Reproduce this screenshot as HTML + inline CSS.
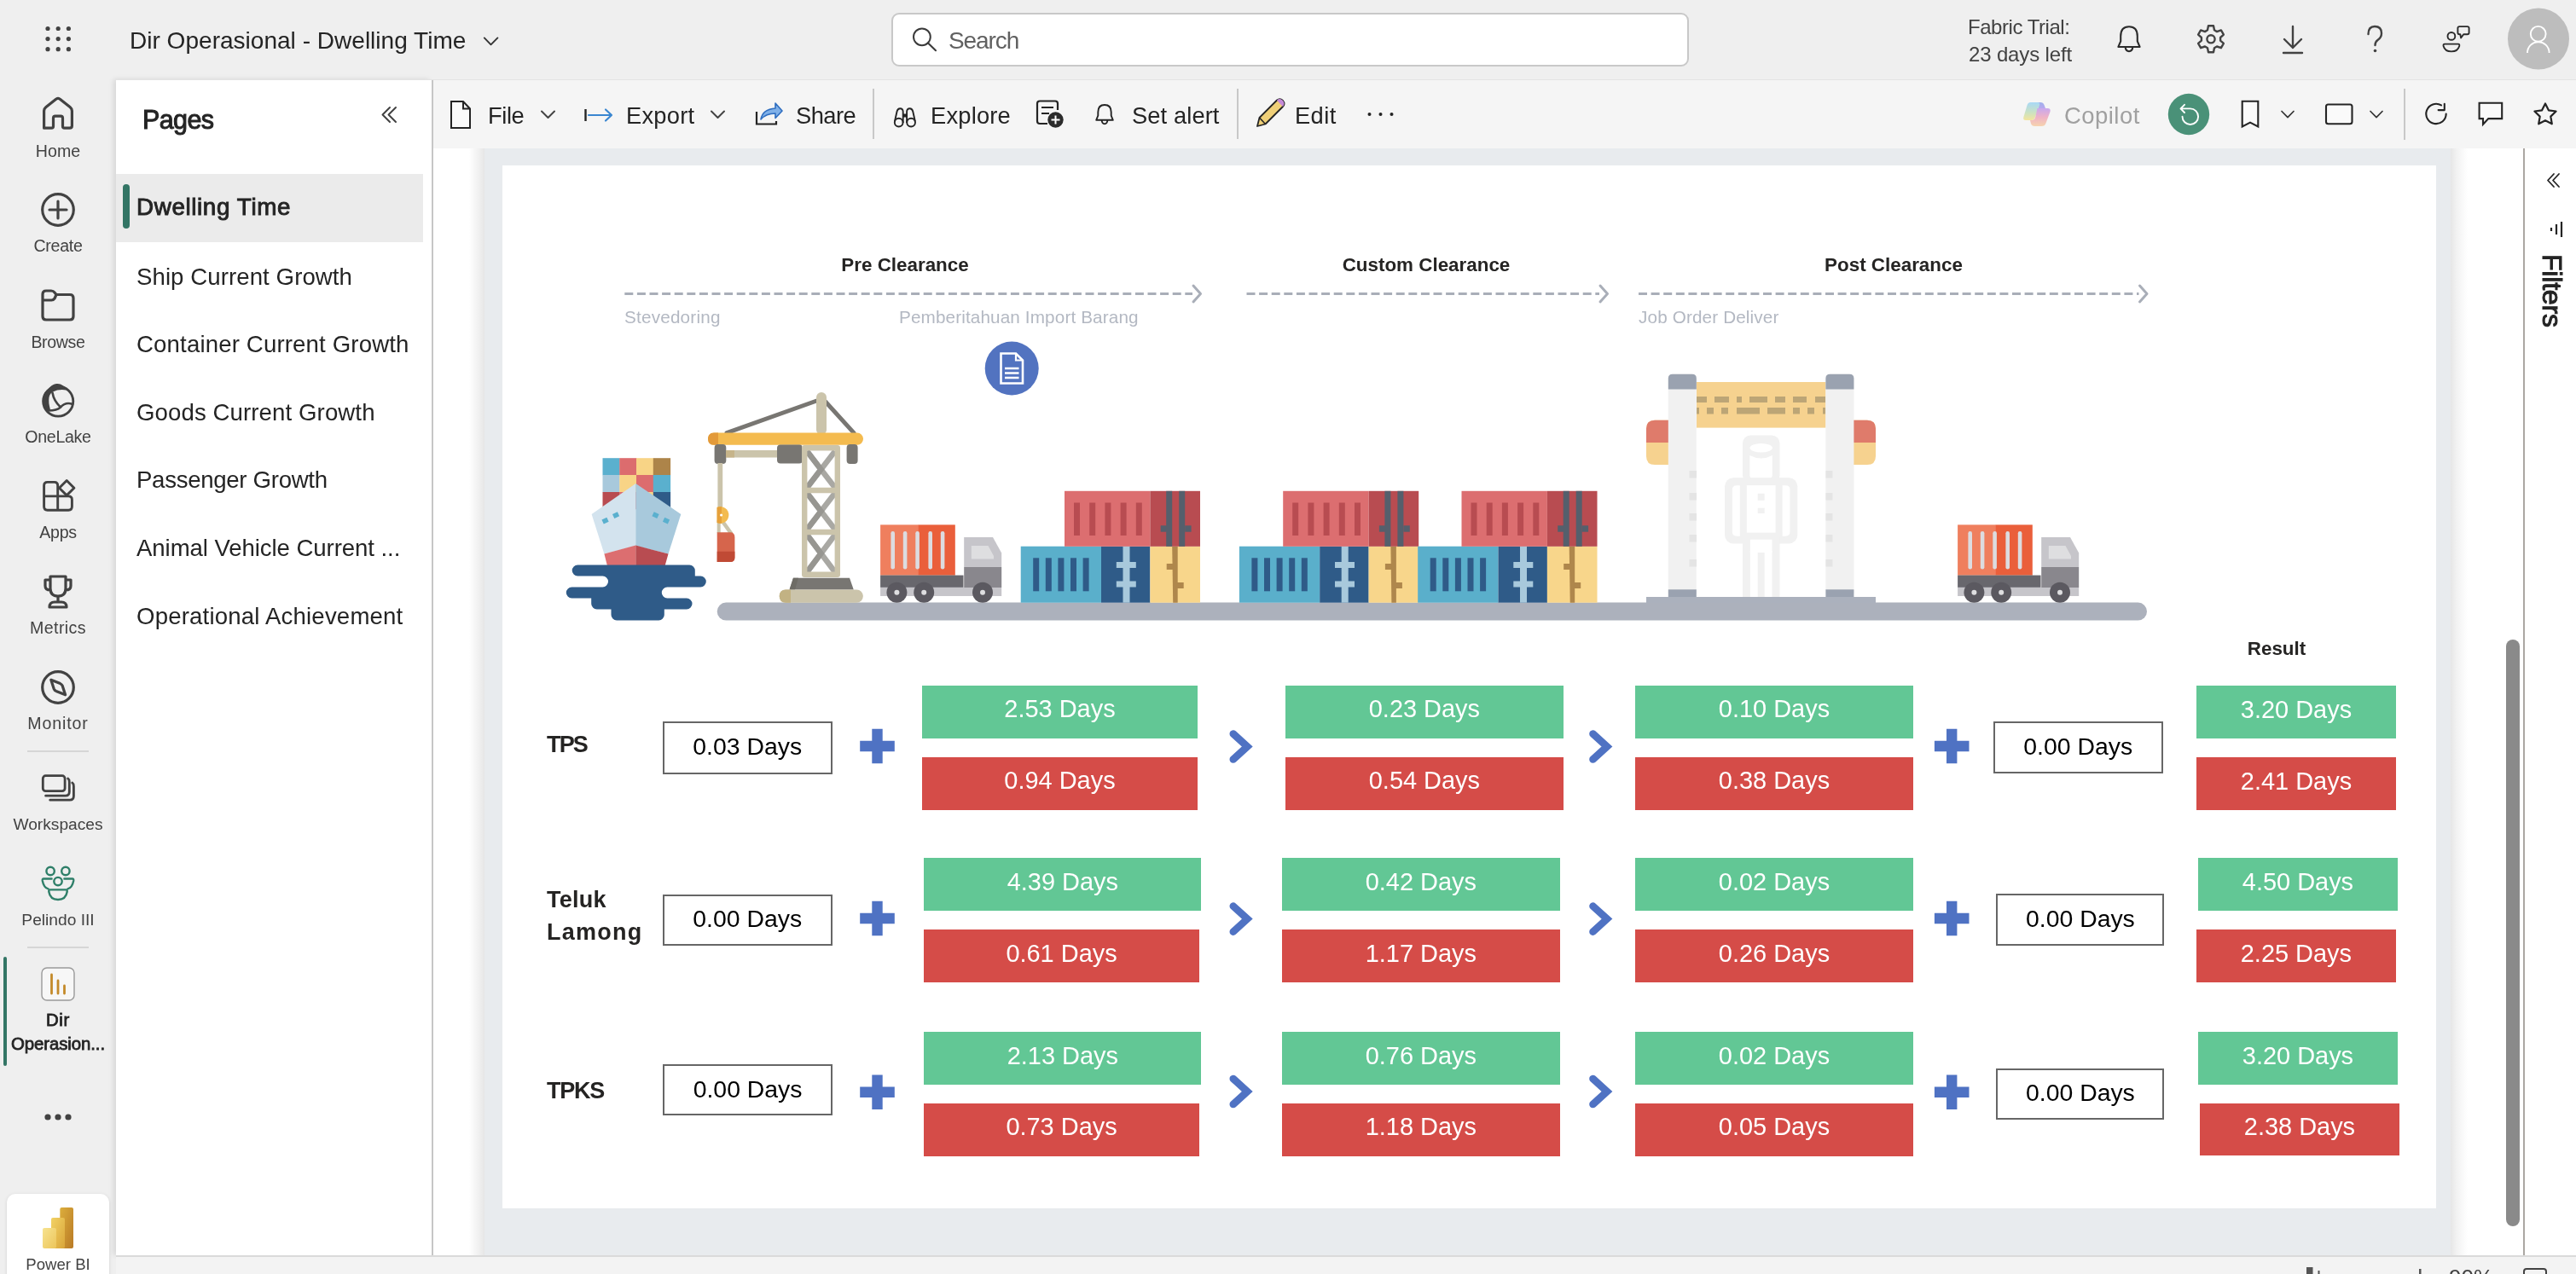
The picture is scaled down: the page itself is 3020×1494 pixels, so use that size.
<!DOCTYPE html>
<html><head><meta charset="utf-8"><title>Dir Operasional - Dwelling Time</title>
<style>
html,body{margin:0;padding:0;}
body{width:3020px;height:1494px;position:relative;overflow:hidden;background:#efefef;font-family:"Liberation Sans",sans-serif;}
.t{position:absolute;white-space:nowrap;will-change:transform;}
.r{position:absolute;}
svg.ov{position:absolute;left:0;top:0;}
</style></head><body>
<div class="r" style="left:136px;top:93px;width:370px;height:1379px;background:#ffffff;box-shadow:-3px 0 6px rgba(0,0,0,0.10);"></div>
<div class="r" style="left:506px;top:93px;width:2px;height:1379px;background:#c6c6c6;"></div>
<div class="r" style="left:508px;top:93px;width:2512px;height:81px;background:#f5f5f5;"></div>
<div class="r" style="left:136px;top:93px;width:2884px;height:1px;background:#e3e3e3;"></div>
<div class="r" style="left:508px;top:174px;width:2450px;height:1298px;background:#ffffff;"></div>
<div class="r" style="left:550px;top:174px;width:18.5px;height:1298px;background:linear-gradient(to right, rgba(240,240,240,0) 0%, rgba(236,236,236,1) 75%, rgba(228,228,228,1) 100%);"></div>
<div class="r" style="left:568px;top:174px;width:2305px;height:1298px;background:#e8ebee;"></div>
<div class="r" style="left:2873px;top:174px;width:20px;height:1298px;background:linear-gradient(to right, rgba(230,230,230,1) 0%, rgba(242,242,242,1) 35%, rgba(255,255,255,0) 100%);"></div>
<div class="r" style="left:589px;top:194px;width:2267px;height:1223px;background:#ffffff;"></div>
<div class="r" style="left:2938px;top:750px;width:16px;height:688px;background:#8a8a8a;border-radius:8px;"></div>
<div class="r" style="left:2960px;top:174px;width:60px;height:1298px;background:#ffffff;"></div>
<div class="r" style="left:2958px;top:174px;width:2px;height:1298px;background:#aba7a3;"></div>
<div class="r" style="left:136px;top:1472px;width:2884px;height:22px;background:#f3f3f3;"></div>
<div class="r" style="left:136px;top:1472px;width:2884px;height:2px;background:#dadada;"></div>
<div class="t" style="left:151.5px;top:33.56px;font-size:28.05px;line-height:28.05px;color:#242424;">Dir Operasional - Dwelling Time</div>
<div class="t" style="left:2307px;top:19.68px;font-size:24px;line-height:24px;color:#424242;letter-spacing:-0.46px;">Fabric Trial:</div>
<div class="t" style="left:2308px;top:52.28px;font-size:24px;line-height:24px;color:#424242;letter-spacing:-0.15px;">23 days left</div>
<div class="r" style="left:1044.5px;top:14.5px;width:935px;height:63px;background:#ffffff;box-sizing:border-box;border:2px solid #c8c8c8;border-radius:9px;"></div>
<div class="t" style="left:1112px;top:33.8px;font-size:28px;line-height:28px;color:#616161;letter-spacing:-1.1px;">Search</div>
<div class="t" style="left:68px;top:167.81px;font-size:19.6px;line-height:19.6px;color:#424242;width:136px;margin-left:-68px;text-align:center;">Home</div>
<div class="t" style="left:68px;top:279.41px;font-size:19.6px;line-height:19.6px;color:#424242;letter-spacing:-0.3px;width:136px;margin-left:-68px;text-align:center;">Create</div>
<div class="t" style="left:68px;top:392.11px;font-size:19.6px;line-height:19.6px;color:#424242;letter-spacing:-0.35px;width:136px;margin-left:-68px;text-align:center;">Browse</div>
<div class="t" style="left:68px;top:503.41px;font-size:19.6px;line-height:19.6px;color:#424242;letter-spacing:-0.3px;width:136px;margin-left:-68px;text-align:center;">OneLake</div>
<div class="t" style="left:68px;top:615.41px;font-size:19.6px;line-height:19.6px;color:#424242;letter-spacing:-0.3px;width:136px;margin-left:-68px;text-align:center;">Apps</div>
<div class="t" style="left:68px;top:727.11px;font-size:19.6px;line-height:19.6px;color:#424242;letter-spacing:0.38px;width:136px;margin-left:-68px;text-align:center;">Metrics</div>
<div class="t" style="left:68px;top:839.41px;font-size:19.6px;line-height:19.6px;color:#424242;letter-spacing:0.85px;width:136px;margin-left:-68px;text-align:center;">Monitor</div>
<div class="t" style="left:68px;top:957.05px;font-size:19.2px;line-height:19.2px;color:#424242;width:136px;margin-left:-68px;text-align:center;">Workspaces</div>
<div class="t" style="left:68px;top:1068.75px;font-size:19.2px;line-height:19.2px;color:#424242;width:136px;margin-left:-68px;text-align:center;">Pelindo III</div>
<div class="t" style="left:68px;top:1186.03px;font-size:20.4px;line-height:20.4px;color:#242424;letter-spacing:0.7px;width:136px;margin-left:-68px;text-align:center;-webkit-text-stroke:0.8px #242424;">Dir</div>
<div class="t" style="left:68px;top:1214.33px;font-size:20.4px;line-height:20.4px;color:#242424;letter-spacing:-0.09px;width:136px;margin-left:-68px;text-align:center;-webkit-text-stroke:0.8px #242424;">Operasion...</div>
<div class="r" style="left:32px;top:880px;width:72px;height:2px;background:#d6d6d6;"></div>
<div class="r" style="left:32px;top:1110px;width:72px;height:2px;background:#d6d6d6;"></div>
<div class="r" style="left:4px;top:1122px;width:4px;height:128px;background:#337565;border-radius:2px;"></div>
<div class="r" style="left:8px;top:1400px;width:120px;height:110px;background:#ffffff;border-radius:10px;box-shadow:0 1px 4px rgba(0,0,0,0.12);"></div>
<div class="t" style="left:68px;top:1473.66px;font-size:18.6px;line-height:18.6px;color:#424242;width:136px;margin-left:-68px;text-align:center;">Power BI</div>
<div class="t" style="left:167.3px;top:124.88px;font-size:30.5px;line-height:30.5px;color:#242424;letter-spacing:-0.6px;-webkit-text-stroke:1.0px #242424;">Pages</div>
<div class="r" style="left:136px;top:204px;width:360px;height:80px;background:#ebebeb;"></div>
<div class="r" style="left:144px;top:216px;width:8px;height:52px;background:#337565;border-radius:4px;"></div>
<div class="t" style="left:159.6px;top:229.47px;font-size:27.8px;line-height:27.8px;color:#242424;letter-spacing:0.62px;-webkit-text-stroke:0.95px #242424;">Dwelling Time</div>
<div class="t" style="left:160px;top:310.54px;font-size:27.6px;line-height:27.6px;color:#242424;letter-spacing:0.08px;">Ship Current Growth</div>
<div class="t" style="left:160px;top:390.14px;font-size:27.6px;line-height:27.6px;color:#242424;letter-spacing:0.15px;">Container Current Growth</div>
<div class="t" style="left:160px;top:469.74px;font-size:27.6px;line-height:27.6px;color:#242424;letter-spacing:0.1px;">Goods Current Growth</div>
<div class="t" style="left:160px;top:549.34px;font-size:27.6px;line-height:27.6px;color:#242424;letter-spacing:-0.3px;">Passenger Growth</div>
<div class="t" style="left:160px;top:628.94px;font-size:27.6px;line-height:27.6px;color:#242424;letter-spacing:-0.08px;">Animal Vehicle Current ...</div>
<div class="t" style="left:160px;top:708.54px;font-size:27.6px;line-height:27.6px;color:#242424;letter-spacing:0.18px;">Operational Achievement</div>
<div class="t" style="left:572px;top:121.89px;font-size:27.3px;line-height:27.3px;color:#242424;letter-spacing:-0.4px;">File</div>
<div class="t" style="left:734px;top:121.89px;font-size:27.3px;line-height:27.3px;color:#242424;letter-spacing:0.25px;">Export</div>
<div class="t" style="left:933.4px;top:121.89px;font-size:27.3px;line-height:27.3px;color:#242424;letter-spacing:-0.55px;">Share</div>
<div class="t" style="left:1091px;top:121.89px;font-size:27.3px;line-height:27.3px;color:#242424;letter-spacing:0.2px;">Explore</div>
<div class="t" style="left:1327px;top:121.89px;font-size:27.3px;line-height:27.3px;color:#242424;letter-spacing:0.1px;">Set alert</div>
<div class="t" style="left:1518px;top:121.89px;font-size:27.3px;line-height:27.3px;color:#242424;letter-spacing:0.4px;">Edit</div>
<div class="t" style="left:2420px;top:121.72px;font-size:27.5px;line-height:27.5px;color:#a0a0a0;letter-spacing:0.45px;">Copilot</div>
<div class="r" style="left:1023px;top:104px;width:2px;height:59px;background:#c8c8c8;"></div>
<div class="r" style="left:1450px;top:104px;width:2px;height:59px;background:#c8c8c8;"></div>
<div class="r" style="left:2818px;top:104px;width:2px;height:60px;background:#c8c8c8;"></div>
<div class="t" style="left:2961px;top:298px;width:60px;height:90px;"><div style="position:absolute;left:46.5px;top:0;transform-origin:0 0;transform:rotate(90deg);font-size:32px;line-height:32px;color:#242424;white-space:nowrap;letter-spacing:-0.2px;-webkit-text-stroke:1px #242424;">Filters</div></div>
<div class="t" style="left:2871px;top:1485.49px;font-size:26px;line-height:26px;color:#424242;">90%</div>
<svg class="ov" width="3020" height="1494" viewBox="0 0 3020 1494">
<circle cx="56" cy="33.5" r="2.6" fill="#424242"/><circle cx="68.2" cy="33.5" r="2.6" fill="#424242"/><circle cx="80.4" cy="33.5" r="2.6" fill="#424242"/><circle cx="56" cy="45.6" r="2.6" fill="#424242"/><circle cx="68.2" cy="45.6" r="2.6" fill="#424242"/><circle cx="80.4" cy="45.6" r="2.6" fill="#424242"/><circle cx="56" cy="57.7" r="2.6" fill="#424242"/><circle cx="68.2" cy="57.7" r="2.6" fill="#424242"/><circle cx="80.4" cy="57.7" r="2.6" fill="#424242"/><path d="M567.8 44.4 L575.5 52.3 L583.4 44.4" fill="none" stroke="#333333" stroke-width="1.9" stroke-linecap="round" stroke-linejoin="round"/><path d="M51.6 150.2 V130 Q51.6 127.5 54 125.5 L66 116 Q68 114.8 70 116 L82 125.5 Q84.4 127.5 84.4 130 V147.5 Q84.4 150.2 81.7 150.2 H75.5 Q73.5 150.2 73.5 148 V138.5 Q73.5 136.2 71.2 136.2 H64.8 Q62.5 136.2 62.5 138.5 V148 Q62.5 150.2 60.5 150.2 Z" fill="none" stroke="#424242" stroke-width="3.2" stroke-linecap="round" stroke-linejoin="round"/><circle cx="68" cy="246" r="18.3" fill="none" stroke="#424242" stroke-width="3.2" stroke-linecap="round" stroke-linejoin="round"/><path d="M68 236 V256 M58 246 H78" fill="none" stroke="#424242" stroke-width="3.2" stroke-linecap="round" stroke-linejoin="round"/><path d="M50 345 Q50 341 54 341 H60 Q62.5 341 64 343 L66 345.5 H82 Q86 345.5 86 349.5 V371 Q86 375 82 375 H54 Q50 375 50 371 Z M50 352 H60.5 Q62.5 352 64 350 L66 345.5" fill="none" stroke="#424242" stroke-width="3.2" stroke-linecap="round" stroke-linejoin="round"/><circle cx="68.2" cy="470.6" r="17.6" fill="none" stroke="#424242" stroke-width="2.8"/><path d="M77.8 457.5 Q74 449 66 450 Q60 451 56 457 Q49 462 50 472 Q51 479 54 482 L59 480.5 Q56.5 472 57.5 466 Q58.5 461 62 459.5 Q69 456 77.8 457.5 Z" fill="#424242"/><path d="M61.5 460.5 Q63 470 71 477.5 Q77 471 85 474 M55 481.5 Q66 482 71 477.5" fill="none" stroke="#424242" stroke-width="2.6" stroke-linecap="round"/><path d="M51.6 569.5 Q51.6 565.4 55.6 565.4 H63.7 Q67.7 565.4 67.7 569.5 V581.9 H80.3 Q84.4 581.9 84.4 586 V594.1 Q84.4 598.2 80.3 598.2 H55.6 Q51.6 598.2 51.6 594.1 Z M51.6 581.9 H67.7 V598.2" fill="none" stroke="#424242" stroke-width="2.9" stroke-linecap="round" stroke-linejoin="round"/><path d="M78.2 563.5 L86.9 572.2 L78.2 580.9 L69.5 572.2 Z" fill="none" stroke="#424242" stroke-width="2.9" stroke-linejoin="round"/><path d="M59 676 H77 V690 Q77 699 68 699 Q59 699 59 690 Z M59 680 H53 V687 Q53 692 59 692 M77 680 H83 V687 Q83 692 77 692 M68 699 V706 M58 712 Q58 706 64 706 H72 Q78 706 78 712 Z" fill="none" stroke="#424242" stroke-width="3.2" stroke-linecap="round" stroke-linejoin="round"/><circle cx="68" cy="806" r="18.3" fill="none" stroke="#424242" stroke-width="3.2" stroke-linecap="round" stroke-linejoin="round"/><path d="M59.8 797.3 L70.6 801.6 Q72.4 802.4 73.2 804.2 L76.6 814.8 L65.8 810.4 Q64 809.6 63.2 807.8 Z" fill="none" stroke="#424242" stroke-width="3.2" stroke-linecap="round" stroke-linejoin="round"/><rect x="50.3" y="909.7" width="25.8" height="17.9" rx="3.2" fill="none" stroke="#424242" stroke-width="2.8" stroke-linecap="round" stroke-linejoin="round"/><path d="M79.6 912.9 Q81.3 914 81.3 917 V928.6 Q81.3 933.2 76.7 933.2 H53.6 M84.7 917.9 Q86.4 919 86.4 922 V933.6 Q86.4 938.2 81.8 938.2 H58.7" fill="none" stroke="#424242" stroke-width="2.8" stroke-linecap="round"/><circle cx="59.1" cy="1021.5" r="4.7" fill="none" stroke="#2f7f69" stroke-width="2.4" stroke-linecap="round" stroke-linejoin="round"/><circle cx="76.9" cy="1021.5" r="4.7" fill="none" stroke="#2f7f69" stroke-width="2.4" stroke-linecap="round" stroke-linejoin="round"/><circle cx="68" cy="1033.6" r="4.7" fill="none" stroke="#2f7f69" stroke-width="2.4" stroke-linecap="round" stroke-linejoin="round"/><path d="M60.6 1030.5 H51.2 Q49.4 1030.5 49.8 1033 Q51.5 1041.3 56.6 1042.4 M75.4 1030.5 H84.8 Q86.6 1030.5 86.2 1033 Q84.5 1041.3 79.4 1042.4 M58.6 1043.4 H77.4 Q79 1043.4 78.7 1045.8 Q77.2 1055 68 1055 Q58.8 1055 57.3 1045.8 Q57 1043.4 58.6 1043.4 Z" fill="none" stroke="#2f7f69" stroke-width="2.4" stroke-linecap="round" stroke-linejoin="round"/><rect x="49" y="1135" width="38" height="38" rx="6" fill="#f7f7f7" stroke="#9a9a9a" stroke-width="1.4"/><path d="M60.5 1143 V1165 M68 1150 V1165 M75.5 1156 V1165" stroke="#c48a2a" stroke-width="2.8" stroke-linecap="round"/><circle cx="56" cy="1310" r="3.6" fill="#424242"/><circle cx="68" cy="1310" r="3.6" fill="#424242"/><circle cx="80" cy="1310" r="3.6" fill="#424242"/><defs><linearGradient id="pb1" x1="0" y1="0" x2="1" y2="1"><stop offset="0" stop-color="#dcae3c"/><stop offset="1" stop-color="#b97a26"/></linearGradient><linearGradient id="pb2" x1="0" y1="0" x2="1" y2="1"><stop offset="0" stop-color="#f2d264"/><stop offset="1" stop-color="#d9a53a"/></linearGradient><linearGradient id="pb3" x1="0" y1="0" x2="1" y2="1"><stop offset="0" stop-color="#f7e390"/><stop offset="1" stop-color="#ecc55a"/></linearGradient></defs><rect x="70.3" y="1416" width="15.7" height="48" rx="2" fill="url(#pb1)"/><rect x="60" y="1428" width="16" height="36" rx="2" fill="url(#pb2)"/><rect x="50" y="1440" width="16" height="24" rx="2" fill="url(#pb3)"/><path d="M457 126 L448.5 134.5 L457 143 M464 126 L455.5 134.5 L464 143" fill="none" stroke="#424242" stroke-width="2" stroke-linecap="round" stroke-linejoin="round"/><circle cx="1080.9" cy="43.3" r="9.9" fill="none" stroke="#3a3a3a" stroke-width="2"/><path d="M1088 50.4 L1097 59.2" stroke="#3a3a3a" stroke-width="2.1" stroke-linecap="round"/><path d="M2483.4 55 L2486.2 48.4 V42.5 Q2486.2 31.2 2496 31.2 Q2505.8 31.2 2505.8 42.5 V48.4 L2508.6 55 Z M2491.6 55.2 Q2492.2 60.2 2496 60.2 Q2499.8 60.2 2500.4 55.2" fill="none" stroke="#2b2b2b" stroke-width="2.1" stroke-linejoin="round"/><path d="M2589.0 30.3 L2595.0 30.3 L2596.0 35.3 L2599.0 37.1 L2603.9 35.4 L2606.9 40.7 L2603.1 44.0 L2603.1 47.6 L2606.9 50.9 L2603.9 56.2 L2599.0 54.5 L2596.0 56.3 L2595.0 61.3 L2589.0 61.3 L2588.0 56.3 L2585.0 54.5 L2580.1 56.2 L2577.1 50.9 L2580.9 47.6 L2580.9 44.0 L2577.1 40.7 L2580.1 35.4 L2585.0 37.1 L2588.0 35.3 Z" fill="none" stroke="#424242" stroke-width="2.4" stroke-linejoin="round"/><circle cx="2592" cy="45.8" r="4.6" fill="none" stroke="#424242" stroke-width="2.4"/><path d="M2688 31 V56 M2678 46 L2688 56 L2698 46 M2677 62 H2699" fill="none" stroke="#424242" stroke-width="2.4" stroke-linecap="round" stroke-linejoin="round"/><path d="M2776.5 40 Q2776.5 31 2784 31 Q2792 31 2792 39 Q2792 44 2787.5 47 Q2784.5 49 2784.5 53" fill="none" stroke="#424242" stroke-width="2.4" stroke-linecap="round"/><circle cx="2784.5" cy="59.5" r="1.8" fill="#424242"/><circle cx="2873.9" cy="42.4" r="4.4" fill="none" stroke="#2b2b2b" stroke-width="1.9"/><path d="M2866 51.6 H2882 Q2883.6 51.6 2883.2 54 Q2881.5 60.4 2873.9 60.4 Q2866.3 60.4 2864.6 54 Q2864.2 51.6 2866 51.6 Z" fill="none" stroke="#2b2b2b" stroke-width="1.9" stroke-linejoin="round"/><path d="M2883.4 31.1 H2892.6 Q2894.6 31.1 2894.6 33.1 V38.2 Q2894.6 40.2 2892.6 40.2 H2888.2 L2885.1 44.4 L2884.3 40.2 H2883.4 Q2881.4 40.2 2881.4 38.2 V33.1 Q2881.4 31.1 2883.4 31.1 Z" fill="none" stroke="#2b2b2b" stroke-width="1.9" stroke-linejoin="round"/><circle cx="2976" cy="45.6" r="36" fill="#bdbdbd"/><circle cx="2975.7" cy="39.8" r="8.9" fill="none" stroke="#ffffff" stroke-width="1.9"/><path d="M2963 62 A12.8 12.8 0 0 1 2988.6 62" fill="none" stroke="#ffffff" stroke-width="1.9"/><path d="M529 119 H543 L551 127.5 V150 H529 Z M543 119 V127.5 H551" fill="#fafafa" stroke="#242424" stroke-width="2" stroke-linejoin="miter"/><path d="M635 130.5 L642.5 138 L650 130.5" fill="none" stroke="#424242" stroke-width="2" stroke-linecap="round" stroke-linejoin="round"/><path d="M686.5 128 V142" stroke="#242424" stroke-width="2.4"/><path d="M690 135 H717 M710 128.5 L717 135 L710 141.5" fill="none" stroke="#3a86d0" stroke-width="2.2" stroke-linecap="round" stroke-linejoin="round"/><path d="M834 130.5 L841.5 138 L849 130.5" fill="none" stroke="#424242" stroke-width="2" stroke-linecap="round" stroke-linejoin="round"/><path d="M887 131 V145.5 H910 V142" fill="none" stroke="#242424" stroke-width="2.2"/><path d="M892 140 Q894 128 909 127 V121 L917 130 L909 138.5 V133 Q898 133 892 140 Z" fill="#7fb0e8" stroke="#2f6ec0" stroke-width="1.6" stroke-linejoin="round"/><circle cx="1053.7" cy="143.6" r="4.9" fill="none" stroke="#242424" stroke-width="1.9"/><circle cx="1068.1" cy="143.6" r="4.9" fill="none" stroke="#242424" stroke-width="1.9"/><path d="M1048.9 142.5 L1051.6 130.5 Q1052.5 127.2 1055.2 127.2 Q1058.6 127.2 1058.7 131 L1058.7 144 M1072.9 142.5 L1070.2 130.5 Q1069.3 127.2 1066.6 127.2 Q1063.2 127.2 1063.1 131 L1063.1 144" fill="none" stroke="#242424" stroke-width="1.9" stroke-linejoin="round"/><rect x="1058.7" y="133.5" width="4.4" height="4" fill="#242424"/><path d="M1240 129 V121.5 Q1240 118.5 1237 118.5 H1219 Q1216 118.5 1216 121.5 V142 Q1216 145 1219 145 H1228" fill="none" stroke="#242424" stroke-width="2.2"/><path d="M1221 126 H1235 M1221 133 H1230" stroke="#242424" stroke-width="2"/><circle cx="1237.5" cy="140.5" r="9.2" fill="#2b2b2b"/><path d="M1237.5 135.5 V145.5 M1232.5 140.5 H1242.5" stroke="#ffffff" stroke-width="2"/><path d="M1285.2 140.8 L1287.3 135.5 V131.5 Q1287.3 123 1295 123 Q1302.7 123 1302.7 131.5 V135.5 L1304.8 140.8 Z M1291.6 141 Q1292 145.2 1295 145.2 Q1298 145.2 1298.4 141" fill="none" stroke="#242424" stroke-width="1.9" stroke-linejoin="round"/><path d="M1474 148 L1476.5 138 L1497 117.5 Q1500.5 114.5 1504 118 Q1507 121.5 1504 125 L1483.5 145.5 Z" fill="#f0d078" stroke="#242424" stroke-width="1.8" stroke-linejoin="round"/><path d="M1497 117.5 Q1500.5 114.5 1504 118 Q1507 121.5 1504 125 L1500 121 Z" fill="#c58ad8"/><path d="M1476.5 138 L1483.5 145.5" stroke="#242424" stroke-width="1.6"/><circle cx="1605.5" cy="134" r="2" fill="#242424"/><circle cx="1618.5" cy="134" r="2" fill="#242424"/><circle cx="1631.5" cy="134" r="2" fill="#242424"/><defs><linearGradient id="cpa" x1="0" y1="0" x2="0" y2="1"><stop offset="0" stop-color="#a8d8f6"/><stop offset="0.55" stop-color="#c9e2c4"/><stop offset="1" stop-color="#f4e59c"/></linearGradient><linearGradient id="cpb" x1="0" y1="0" x2="0" y2="1"><stop offset="0" stop-color="#c8a8ee"/><stop offset="0.5" stop-color="#efb3c6"/><stop offset="1" stop-color="#f6d3ae"/></linearGradient><linearGradient id="cpc" x1="0" y1="0" x2="0" y2="1"><stop offset="0" stop-color="#9fb0ec"/><stop offset="1" stop-color="#b8a8ee"/></linearGradient></defs><path d="M2387 120 H2392 Q2395.5 120 2396.5 123 L2398 127 H2390 Z" fill="url(#cpc)"/><path d="M2380.5 120 H2389 Q2392 120 2391 123.5 L2385.5 138.5 Q2384.5 141 2381.5 141 H2375 Q2371.5 141 2372.3 137.5 L2376.5 123.5 Q2377.5 120 2380.5 120 Z" fill="url(#cpa)"/><path d="M2388.5 127 H2400.5 Q2404.5 127 2403.5 131 L2398.5 144.5 Q2397.3 148 2393.5 148 H2385.5 Q2382 148 2381 145 L2380 141 H2382 Q2385 141 2386 138 Z" fill="url(#cpb)"/><circle cx="2566" cy="134" r="24.2" fill="#4a9178"/><path d="M2558.5 136.7 A9.3 9.3 0 1 0 2567.8 127.4 H2556.5 M2561 122.8 L2556.5 127.4 L2561 132" fill="none" stroke="#ffffff" stroke-width="1.9" stroke-linecap="round" stroke-linejoin="round"/><path d="M2628.7 118.7 H2647.3 V148.5 L2638 143.6 L2628.7 148.5 Z" fill="#fafafa" stroke="#242424" stroke-width="2.1" stroke-linejoin="miter"/><path d="M2675 130.5 L2682 137.6 L2689 130.5" fill="none" stroke="#333333" stroke-width="1.7" stroke-linecap="round" stroke-linejoin="round"/><rect x="2727" y="122.5" width="30.5" height="22.8" rx="2.5" fill="#fafafa" stroke="#242424" stroke-width="2.1"/><path d="M2779 130.5 L2786 137.6 L2793 130.5" fill="none" stroke="#333333" stroke-width="1.7" stroke-linecap="round" stroke-linejoin="round"/><path d="M2867.7 133.5 A11.7 11.7 0 1 1 2862 123.4" fill="none" stroke="#242424" stroke-width="2.1" stroke-linecap="round"/><path d="M2858.6 129.1 H2865.8 V121.8" fill="none" stroke="#242424" stroke-width="2.1" stroke-linecap="round" stroke-linejoin="round"/><path d="M2906.6 120.8 H2933.2 V139.1 H2917.3 L2911 145.8 V139.1 H2906.6 Z" fill="#fafafa" stroke="#242424" stroke-width="2.1" stroke-linejoin="miter"/><path d="M2984.0 121.4 L2987.9 129.3 L2996.6 130.5 L2990.3 136.6 L2991.8 145.3 L2984.0 141.2 L2976.2 145.3 L2977.7 136.6 L2971.4 130.5 L2980.1 129.3 Z" fill="none" stroke="#242424" stroke-width="2.2" stroke-linejoin="round"/><path d="M2994 204 L2987 211.5 L2994 219 M3000 204 L2993 211.5 L3000 219" fill="none" stroke="#242424" stroke-width="1.8" stroke-linecap="round" stroke-linejoin="round"/><path d="M3003 260 V278 M2997 263 V275 M2991 267 V271" stroke="#242424" stroke-width="2.2"/><rect x="2704" y="1486" width="7.5" height="12" fill="#555"/><rect x="2717.5" y="1490" width="2" height="8" fill="#555"/><rect x="2836" y="1488" width="2.5" height="10" fill="#555"/><rect x="2959" y="1488" width="26" height="16" rx="3" fill="none" stroke="#424242" stroke-width="2"/></svg>
<div class="t" style="left:1061.2px;top:299.54px;font-size:22.4px;line-height:22.4px;color:#252423;font-weight:700;width:400px;margin-left:-200px;text-align:center;">Pre Clearance</div>
<div class="t" style="left:1672.4px;top:299.54px;font-size:22.4px;line-height:22.4px;color:#252423;font-weight:700;width:400px;margin-left:-200px;text-align:center;">Custom Clearance</div>
<div class="t" style="left:2220.3px;top:299.54px;font-size:22.4px;line-height:22.4px;color:#252423;font-weight:700;width:400px;margin-left:-200px;text-align:center;">Post Clearance</div>
<div class="t" style="left:732px;top:362.08px;font-size:20.7px;line-height:20.7px;color:#b3b8c2;letter-spacing:0.2px;">Stevedoring</div>
<div class="t" style="left:1053.5px;top:362.08px;font-size:20.7px;line-height:20.7px;color:#b3b8c2;letter-spacing:0.13px;">Pemberitahuan Import Barang</div>
<div class="t" style="left:1920.5px;top:362.08px;font-size:20.7px;line-height:20.7px;color:#b3b8c2;letter-spacing:0.14px;">Job Order Deliver</div>
<div class="t" style="left:2668.6px;top:749.84px;font-size:22.4px;line-height:22.4px;color:#252423;font-weight:700;width:200px;margin-left:-100px;text-align:center;">Result</div>
<div class="t" style="left:641px;top:859.74px;font-size:27px;line-height:27px;color:#252423;font-weight:700;letter-spacing:-1.85px;">TPS</div>
<div class="t" style="left:641px;top:1041.94px;font-size:27px;line-height:27px;color:#252423;font-weight:700;letter-spacing:0.22px;">Teluk</div>
<div class="t" style="left:641px;top:1079.84px;font-size:27px;line-height:27px;color:#252423;font-weight:700;letter-spacing:1.24px;">Lamong</div>
<div class="t" style="left:641px;top:1265.64px;font-size:27px;line-height:27px;color:#252423;font-weight:700;letter-spacing:-1.23px;">TPKS</div>
<div class="r" style="left:777px;top:846.3px;width:198.5px;height:61.3px;background:#ffffff;box-sizing:border-box;border:2.2px solid #666666;"></div>
<div class="t" style="left:876.25px;top:861.21px;font-size:28.4px;line-height:28.4px;color:#000000;width:198.5px;margin-left:-99.25px;text-align:center;">0.03 Days</div>
<div class="r" style="left:2337.3px;top:846.2px;width:198.5px;height:61.2px;background:#ffffff;box-sizing:border-box;border:2.2px solid #666666;"></div>
<div class="t" style="left:2436.55px;top:861.06px;font-size:28.4px;line-height:28.4px;color:#000000;width:198.5px;margin-left:-99.25px;text-align:center;">0.00 Days</div>
<div class="r" style="left:1081px;top:803.7px;width:323px;height:62px;background:#62c795;"></div>
<div class="t" style="left:1242.5px;top:817.49px;font-size:28.95px;line-height:28.95px;color:#ffffff;width:323px;margin-left:-161.5px;text-align:center;">2.53 Days</div>
<div class="r" style="left:1081px;top:887.8px;width:323px;height:61.8px;background:#d54c48;"></div>
<div class="t" style="left:1242.5px;top:901.49px;font-size:28.95px;line-height:28.95px;color:#ffffff;width:323px;margin-left:-161.5px;text-align:center;">0.94 Days</div>
<div class="r" style="left:1507.2px;top:803.7px;width:325.8px;height:62px;background:#62c795;"></div>
<div class="t" style="left:1670.1px;top:817.49px;font-size:28.95px;line-height:28.95px;color:#ffffff;width:325.8px;margin-left:-162.9px;text-align:center;">0.23 Days</div>
<div class="r" style="left:1507.2px;top:887.8px;width:325.8px;height:61.8px;background:#d54c48;"></div>
<div class="t" style="left:1670.1px;top:901.49px;font-size:28.95px;line-height:28.95px;color:#ffffff;width:325.8px;margin-left:-162.9px;text-align:center;">0.54 Days</div>
<div class="r" style="left:1917px;top:803.7px;width:326px;height:62px;background:#62c795;"></div>
<div class="t" style="left:2080px;top:817.49px;font-size:28.95px;line-height:28.95px;color:#ffffff;width:326px;margin-left:-163px;text-align:center;">0.10 Days</div>
<div class="r" style="left:1917px;top:887.8px;width:326px;height:61.8px;background:#d54c48;"></div>
<div class="t" style="left:2080px;top:901.49px;font-size:28.95px;line-height:28.95px;color:#ffffff;width:326px;margin-left:-163px;text-align:center;">0.38 Days</div>
<div class="r" style="left:2575px;top:804px;width:234px;height:61.7px;background:#62c795;"></div>
<div class="t" style="left:2692px;top:817.64px;font-size:28.95px;line-height:28.95px;color:#ffffff;width:234px;margin-left:-117px;text-align:center;">3.20 Days</div>
<div class="r" style="left:2575px;top:887.9px;width:234px;height:61.8px;background:#d54c48;"></div>
<div class="t" style="left:2692px;top:901.59px;font-size:28.95px;line-height:28.95px;color:#ffffff;width:234px;margin-left:-117px;text-align:center;">2.41 Days</div>
<div class="r" style="left:777px;top:1048.6px;width:198.5px;height:60.8px;background:#ffffff;box-sizing:border-box;border:2.2px solid #666666;"></div>
<div class="t" style="left:876.25px;top:1063.26px;font-size:28.4px;line-height:28.4px;color:#000000;width:198.5px;margin-left:-99.25px;text-align:center;">0.00 Days</div>
<div class="r" style="left:2339.7px;top:1048.4px;width:197.8px;height:61px;background:#ffffff;box-sizing:border-box;border:2.2px solid #666666;"></div>
<div class="t" style="left:2438.6px;top:1063.16px;font-size:28.4px;line-height:28.4px;color:#000000;width:197.8px;margin-left:-98.9px;text-align:center;">0.00 Days</div>
<div class="r" style="left:1082.8px;top:1005.7px;width:325.7px;height:62.1px;background:#62c795;"></div>
<div class="t" style="left:1245.65px;top:1019.54px;font-size:28.95px;line-height:28.95px;color:#ffffff;width:325.7px;margin-left:-162.85px;text-align:center;">4.39 Days</div>
<div class="r" style="left:1082.8px;top:1089.9px;width:323.1px;height:61.7px;background:#d54c48;"></div>
<div class="t" style="left:1244.35px;top:1103.54px;font-size:28.95px;line-height:28.95px;color:#ffffff;width:323.1px;margin-left:-161.55px;text-align:center;">0.61 Days</div>
<div class="r" style="left:1503.3px;top:1005.7px;width:325.7px;height:62.1px;background:#62c795;"></div>
<div class="t" style="left:1666.15px;top:1019.54px;font-size:28.95px;line-height:28.95px;color:#ffffff;width:325.7px;margin-left:-162.85px;text-align:center;">0.42 Days</div>
<div class="r" style="left:1503.3px;top:1089.9px;width:325.7px;height:61.7px;background:#d54c48;"></div>
<div class="t" style="left:1666.15px;top:1103.54px;font-size:28.95px;line-height:28.95px;color:#ffffff;width:325.7px;margin-left:-162.85px;text-align:center;">1.17 Days</div>
<div class="r" style="left:1917px;top:1005.7px;width:326px;height:62.1px;background:#62c795;"></div>
<div class="t" style="left:2080px;top:1019.54px;font-size:28.95px;line-height:28.95px;color:#ffffff;width:326px;margin-left:-163px;text-align:center;">0.02 Days</div>
<div class="r" style="left:1917px;top:1089.9px;width:326px;height:61.7px;background:#d54c48;"></div>
<div class="t" style="left:2080px;top:1103.54px;font-size:28.95px;line-height:28.95px;color:#ffffff;width:326px;margin-left:-163px;text-align:center;">0.26 Days</div>
<div class="r" style="left:2576.8px;top:1006px;width:233.9px;height:62px;background:#62c795;"></div>
<div class="t" style="left:2693.75px;top:1019.79px;font-size:28.95px;line-height:28.95px;color:#ffffff;width:233.9px;margin-left:-116.95px;text-align:center;">4.50 Days</div>
<div class="r" style="left:2575.2px;top:1090px;width:233.8px;height:61.7px;background:#d54c48;"></div>
<div class="t" style="left:2692.1px;top:1103.64px;font-size:28.95px;line-height:28.95px;color:#ffffff;width:233.8px;margin-left:-116.9px;text-align:center;">2.25 Days</div>
<div class="r" style="left:777px;top:1248.3px;width:199.2px;height:60px;background:#ffffff;box-sizing:border-box;border:2.2px solid #666666;"></div>
<div class="t" style="left:876.6px;top:1262.56px;font-size:28.4px;line-height:28.4px;color:#000000;width:199.2px;margin-left:-99.6px;text-align:center;">0.00 Days</div>
<div class="r" style="left:2339.7px;top:1252.5px;width:197.8px;height:60.9px;background:#ffffff;box-sizing:border-box;border:2.2px solid #666666;"></div>
<div class="t" style="left:2438.6px;top:1267.21px;font-size:28.4px;line-height:28.4px;color:#000000;width:197.8px;margin-left:-98.9px;text-align:center;">0.00 Days</div>
<div class="r" style="left:1082.8px;top:1210px;width:325.7px;height:61.7px;background:#62c795;"></div>
<div class="t" style="left:1245.65px;top:1223.64px;font-size:28.95px;line-height:28.95px;color:#ffffff;width:325.7px;margin-left:-162.85px;text-align:center;">2.13 Days</div>
<div class="r" style="left:1082.8px;top:1293.5px;width:323.1px;height:62px;background:#d54c48;"></div>
<div class="t" style="left:1244.35px;top:1307.29px;font-size:28.95px;line-height:28.95px;color:#ffffff;width:323.1px;margin-left:-161.55px;text-align:center;">0.73 Days</div>
<div class="r" style="left:1503.3px;top:1210px;width:325.7px;height:61.7px;background:#62c795;"></div>
<div class="t" style="left:1666.15px;top:1223.64px;font-size:28.95px;line-height:28.95px;color:#ffffff;width:325.7px;margin-left:-162.85px;text-align:center;">0.76 Days</div>
<div class="r" style="left:1503.3px;top:1293.5px;width:325.7px;height:62px;background:#d54c48;"></div>
<div class="t" style="left:1666.15px;top:1307.29px;font-size:28.95px;line-height:28.95px;color:#ffffff;width:325.7px;margin-left:-162.85px;text-align:center;">1.18 Days</div>
<div class="r" style="left:1917px;top:1210px;width:326px;height:61.7px;background:#62c795;"></div>
<div class="t" style="left:2080px;top:1223.64px;font-size:28.95px;line-height:28.95px;color:#ffffff;width:326px;margin-left:-163px;text-align:center;">0.02 Days</div>
<div class="r" style="left:1917px;top:1293.5px;width:326px;height:62px;background:#d54c48;"></div>
<div class="t" style="left:2080px;top:1307.29px;font-size:28.95px;line-height:28.95px;color:#ffffff;width:326px;margin-left:-163px;text-align:center;">0.05 Days</div>
<div class="r" style="left:2576.8px;top:1210.1px;width:233.9px;height:61.6px;background:#62c795;"></div>
<div class="t" style="left:2693.75px;top:1223.69px;font-size:28.95px;line-height:28.95px;color:#ffffff;width:233.9px;margin-left:-116.95px;text-align:center;">3.20 Days</div>
<div class="r" style="left:2579px;top:1294px;width:233.9px;height:61.2px;background:#d54c48;"></div>
<div class="t" style="left:2695.95px;top:1307.39px;font-size:28.95px;line-height:28.95px;color:#ffffff;width:233.9px;margin-left:-116.95px;text-align:center;">2.38 Days</div>
<svg class="ov" width="3020" height="1494" viewBox="0 0 3020 1494">
<path d="M1008.2 875 H1048.8 M1028.5 854.8 V895.2" stroke="#4f72c3" stroke-width="12.4" stroke-linecap="butt"/><path d="M2267.8999999999996 875 H2308.5 M2288.2 854.8 V895.2" stroke="#4f72c3" stroke-width="12.4" stroke-linecap="butt"/><path d="M1445.8 860.5 L1462.3 875.5 L1445.8 890.5" fill="none" stroke="#4f72c3" stroke-width="8.6" stroke-linecap="round" stroke-linejoin="miter"/><path d="M1867.5 860.5 L1884 875.5 L1867.5 890.5" fill="none" stroke="#4f72c3" stroke-width="8.6" stroke-linecap="round" stroke-linejoin="miter"/><path d="M1008.2 1077 H1048.8 M1028.5 1056.8 V1097.2" stroke="#4f72c3" stroke-width="12.4" stroke-linecap="butt"/><path d="M2267.8999999999996 1077 H2308.5 M2288.2 1056.8 V1097.2" stroke="#4f72c3" stroke-width="12.4" stroke-linecap="butt"/><path d="M1445.8 1062.6 L1462.3 1077.6 L1445.8 1092.6" fill="none" stroke="#4f72c3" stroke-width="8.6" stroke-linecap="round" stroke-linejoin="miter"/><path d="M1867.5 1062.6 L1884 1077.6 L1867.5 1092.6" fill="none" stroke="#4f72c3" stroke-width="8.6" stroke-linecap="round" stroke-linejoin="miter"/><path d="M1008.2 1280.7 H1048.8 M1028.5 1260.5 V1300.9" stroke="#4f72c3" stroke-width="12.4" stroke-linecap="butt"/><path d="M2267.8999999999996 1280.7 H2308.5 M2288.2 1260.5 V1300.9" stroke="#4f72c3" stroke-width="12.4" stroke-linecap="butt"/><path d="M1445.8 1265 L1462.3 1280 L1445.8 1295" fill="none" stroke="#4f72c3" stroke-width="8.6" stroke-linecap="round" stroke-linejoin="miter"/><path d="M1867.5 1265 L1884 1280 L1867.5 1295" fill="none" stroke="#4f72c3" stroke-width="8.6" stroke-linecap="round" stroke-linejoin="miter"/><path d="M732.3 344.5 H1398" stroke="#a9aeb8" stroke-width="3" stroke-dasharray="10 4.6"/><path d="M1399 335 L1407.5 344.5 L1399 354" fill="none" stroke="#a9aeb8" stroke-width="3" stroke-linecap="round" stroke-linejoin="round"/><path d="M1461.5 344.5 H1875" stroke="#a9aeb8" stroke-width="3" stroke-dasharray="10 4.6"/><path d="M1876 335 L1884.5 344.5 L1876 354" fill="none" stroke="#a9aeb8" stroke-width="3" stroke-linecap="round" stroke-linejoin="round"/><path d="M1921 344.5 H2507.5" stroke="#a9aeb8" stroke-width="3" stroke-dasharray="10 4.6"/><path d="M2508.5 335 L2517.0 344.5 L2508.5 354" fill="none" stroke="#a9aeb8" stroke-width="3" stroke-linecap="round" stroke-linejoin="round"/><circle cx="1186.2" cy="432" r="31.5" fill="#5273c0"/><path d="M1173.5 414.5 H1191 L1199 422.5 V449.5 H1173.5 Z" fill="none" stroke="#ffffff" stroke-width="2.6" stroke-linejoin="miter"/><path d="M1191 414.5 V422.5 H1199" fill="none" stroke="#ffffff" stroke-width="2.2"/><path d="M1178 432 H1194.5 M1178 437.5 H1194.5 M1178 443 H1194.5" stroke="#ffffff" stroke-width="2.4"/><rect x="840.7" y="706.6" width="1676.3" height="21" rx="10.5" fill="#acb1bc"/><rect x="706.5" y="537.2" width="20.099999999999955" height="20.099999999999955" fill="#5ab0ce"/><rect x="726.3" y="537.2" width="20.000000000000046" height="20.099999999999955" fill="#dc6c6e"/><rect x="746" y="537.2" width="20.099999999999955" height="20.099999999999955" fill="#f8d486"/><rect x="765.8" y="537.2" width="20.3" height="20.099999999999955" fill="#ad8449"/><rect x="706.5" y="557" width="20.099999999999955" height="20.3" fill="#a8c9dc"/><rect x="726.3" y="557" width="20.000000000000046" height="20.3" fill="#f8d486"/><rect x="746" y="557" width="20.099999999999955" height="20.3" fill="#dc6c6e"/><rect x="765.8" y="557" width="20.3" height="20.3" fill="#5ab0ce"/><rect x="706.5" y="577" width="20.099999999999955" height="20.3" fill="#b84c51"/><rect x="726.3" y="577" width="20.000000000000046" height="20.3" fill="#dc6c6e"/><rect x="746" y="577" width="20.099999999999955" height="20.3" fill="#f8d486"/><rect x="765.8" y="577" width="20.3" height="20.3" fill="#2f5b88"/><path d="M745.3 567 L693.6 603 L708.4 649.5 L745.3 640 Z" fill="#d3e3ee"/><path d="M745.3 567 L798.3 603 L783.5 649.5 L745.3 640 Z" fill="#a8c9dc"/><path d="M708.4 649.5 L745.3 639.6 L745.3 665.5 L712.5 665.5 Z" fill="#dc6e70"/><path d="M783.5 649.5 L745.3 639.6 L745.3 665.5 L779 665.5 Z" fill="#b84c51"/><rect x="706.3" y="607.8" width="6.5" height="5.5" fill="#5ab0ce" transform="rotate(-25 709.5 610.5)"/><rect x="718.8" y="601.3" width="6.5" height="5.5" fill="#5ab0ce" transform="rotate(-25 722 604)"/><rect x="765.3" y="601.3" width="6.5" height="5.5" fill="#5ab0ce" transform="rotate(25 768.5 604)"/><rect x="777.8" y="607.8" width="6.5" height="5.5" fill="#5ab0ce" transform="rotate(25 781 610.5)"/><path d="M677.2 662.5 H808.3 A6.5 6.5 0 0 1 814.8 669 V675.5 H821.3 A6.5 6.5 0 0 1 827.8 682 A6.5 6.5 0 0 1 821.3 688.5 H782.3 A6.5 6.5 0 0 0 782.3 701.5 H805 A6.5 6.5 0 0 1 811.5 708 A6.5 6.5 0 0 1 805 714.5 H778.8 V721 A6.5 6.5 0 0 1 772.3 727.5 H723 A6.5 6.5 0 0 1 716.5 721 V714.5 H699.7 A6.5 6.5 0 0 1 693.2 708 V701.5 H670.3 A6.5 6.5 0 0 1 663.8 695 A6.5 6.5 0 0 1 670.3 688.5 H706.5 A6.5 6.5 0 0 0 706.5 675.5 H677.2 A6.5 6.5 0 0 1 670.7 669 A6.5 6.5 0 0 1 677.2 662.5 Z" fill="#2f5b88"/><path d="M963 468 L852 507.6 M965 468 L1001 507.6" stroke="#787672" stroke-width="5" stroke-linecap="round"/><rect x="957" y="460" width="12" height="50" rx="6" fill="#cbc4ab"/><rect x="830" y="507.6" width="182" height="14.2" rx="7" fill="#f4bb4f"/><path d="M837 507.6 H842 V521.8 H837 Q830 521.8 830 514.7 Q830 507.6 837 507.6 Z" fill="#e39a39"/><rect x="837.6" y="521" width="13.7" height="23" rx="4" fill="#787672"/><rect x="992.6" y="521" width="13" height="23" rx="4" fill="#787672"/><rect x="851" y="528" width="61" height="8.5" fill="#cbc4ab"/><rect x="851" y="528" width="10" height="8.5" fill="#c6b48a"/><rect x="911" y="521.5" width="30" height="22" rx="4" fill="#787672"/><rect x="940" y="522" width="45" height="155" rx="3" fill="#ffffff"/><path d="M946 529 L979 572 M979 529 L946 572" stroke="#a9a8a3" stroke-width="6.5"/><path d="M946 529 L962.5 550.5 L946 572" fill="none" stroke="#979691" stroke-width="6.5"/><path d="M946 578 L979 621 M979 578 L946 621" stroke="#a9a8a3" stroke-width="6.5"/><path d="M946 578 L962.5 599.5 L946 621" fill="none" stroke="#979691" stroke-width="6.5"/><path d="M946 627 L979 671 M979 627 L946 671" stroke="#a9a8a3" stroke-width="6.5"/><path d="M946 627 L962.5 649.0 L946 671" fill="none" stroke="#979691" stroke-width="6.5"/><path d="M943.2 525.2 H981.8 V673.8 H943.2 Z M943.2 575 H981.8 M943.2 624 H981.8" fill="none" stroke="#cbc4ab" stroke-width="6.4" stroke-linejoin="round"/><path d="M930 677.8 H996 L1000.8 691.4 H925.5 Z" fill="#787672"/><path d="M930 677.8 H936 L932 691.4 H925.5 Z" fill="#6e6c66"/><rect x="913.7" y="691.4" width="98.2" height="15.3" rx="7.6" fill="#cbc4ab"/><path d="M921 691.4 H927 V706.7 H921 Q913.7 706.7 913.7 699 Q913.7 691.4 921 691.4 Z" fill="#c2b283"/><rect x="841.4" y="543" width="5.8" height="52" fill="#cbc4ab"/><path d="M846 610 L857.5 626" stroke="#cbc4ab" stroke-width="4.5"/><rect x="840.7" y="610" width="4" height="15" fill="#cbc4ab"/><path d="M840.6 594.9 A9.9 9.9 0 1 1 840.6 613.1 Z" fill="#f3bb4f"/><path d="M840.6 594.9 A9.9 9.9 0 0 1 846 594.3 L846 613.7 A9.9 9.9 0 0 1 840.6 613.1 Z" fill="#e6a03a"/><circle cx="845.6" cy="604" r="1.6" fill="#ffffff"/><path d="M840.7 624.3 H856 Q861.4 624.3 861.4 630 V654 Q861.4 659 856 659 H840.7 Z" fill="#d6654c"/><path d="M840.7 646.7 H861.4 V654 Q861.4 659 856 659 H840.7 Z" fill="#c04a35"/><rect x="1032.1" y="615.4" width="44.2" height="59.3" fill="#ef7f5e"/><rect x="1076.2" y="615.4" width="43.6" height="59.3" fill="#ea5f3b"/><rect x="1044.4" y="622.9" width="4.6" height="44.7" rx="2.3" fill="#dcdce0"/><rect x="1058.8" y="622.9" width="4.6" height="44.7" rx="2.3" fill="#dcdce0"/><rect x="1073.3" y="622.9" width="4.6" height="44.7" rx="2.3" fill="#dcdce0"/><rect x="1088.4" y="622.9" width="4.6" height="44.7" rx="2.3" fill="#dcdce0"/><rect x="1102.8" y="622.9" width="4.6" height="44.7" rx="2.3" fill="#dcdce0"/><rect x="1032.1" y="674.6" width="97.4" height="14.3" fill="#68676d"/><rect x="1032.1" y="688.9" width="142.1" height="10.1" fill="#c6c5ca"/><path d="M1130.2 629.9 H1164 L1174.2 648.5 V665 H1130.2 Z" fill="#c6c5ca"/><rect x="1130.2" y="665" width="44" height="24" fill="#89878d"/><path d="M1138.8 640 H1158.5 L1165 652 V655.5 H1138.8 Z" fill="#dedee0"/><circle cx="1051.4" cy="694.8" r="12" fill="#5b5960"/><circle cx="1051.4" cy="694.8" r="3" fill="#dedee0"/><circle cx="1083.2" cy="694.8" r="12" fill="#5b5960"/><circle cx="1083.2" cy="694.8" r="3" fill="#dedee0"/><circle cx="1152" cy="694.8" r="12" fill="#5b5960"/><circle cx="1152" cy="694.8" r="3" fill="#dedee0"/><rect x="2295.1" y="615.4" width="44.2" height="59.3" fill="#ef7f5e"/><rect x="2339.2" y="615.4" width="43.6" height="59.3" fill="#ea5f3b"/><rect x="2307.4" y="622.9" width="4.6" height="44.7" rx="2.3" fill="#dcdce0"/><rect x="2321.8" y="622.9" width="4.6" height="44.7" rx="2.3" fill="#dcdce0"/><rect x="2336.3" y="622.9" width="4.6" height="44.7" rx="2.3" fill="#dcdce0"/><rect x="2351.4" y="622.9" width="4.6" height="44.7" rx="2.3" fill="#dcdce0"/><rect x="2365.8" y="622.9" width="4.6" height="44.7" rx="2.3" fill="#dcdce0"/><rect x="2295.1" y="674.6" width="97.4" height="14.3" fill="#68676d"/><rect x="2295.1" y="688.9" width="142.1" height="10.1" fill="#c6c5ca"/><path d="M2393.2 629.9 H2427 L2437.2 648.5 V665 H2393.2 Z" fill="#c6c5ca"/><rect x="2393.2" y="665" width="44" height="24" fill="#89878d"/><path d="M2401.8 640 H2421.5 L2428 652 V655.5 H2401.8 Z" fill="#dedee0"/><circle cx="2314.4" cy="694.8" r="12" fill="#5b5960"/><circle cx="2314.4" cy="694.8" r="3" fill="#dedee0"/><circle cx="2346.2" cy="694.8" r="12" fill="#5b5960"/><circle cx="2346.2" cy="694.8" r="3" fill="#dedee0"/><circle cx="2415" cy="694.8" r="12" fill="#5b5960"/><circle cx="2415" cy="694.8" r="3" fill="#dedee0"/><rect x="1196.7" y="640.7" width="94.3" height="66" fill="#5aafcb"/><rect x="1211.2" y="654.3" width="7" height="39" fill="#2f5b88"/><rect x="1225.8" y="654.3" width="7" height="39" fill="#2f5b88"/><rect x="1240.4" y="654.3" width="7" height="39" fill="#2f5b88"/><rect x="1255.0" y="654.3" width="7" height="39" fill="#2f5b88"/><rect x="1269.6" y="654.3" width="7" height="39" fill="#2f5b88"/><rect x="1291.0" y="640.7" width="57.4" height="66" fill="#2f5b88"/><rect x="1316.5" y="640.7" width="8" height="66" fill="#a8c9dc"/><rect x="1308.8" y="659" width="23" height="7" fill="#a8c9dc"/><rect x="1308.8" y="681.5" width="23" height="7" fill="#a8c9dc"/><rect x="1348.4" y="640.7" width="58.6" height="66" fill="#f8d68b"/><path d="M1374.2 640.7 H1380.7 V706.7 H1375.2 Z" fill="#af874c"/><rect x="1367.7" y="661" width="8" height="7" fill="#af874c"/><rect x="1379.7" y="683" width="8" height="7" fill="#af874c"/><rect x="1248.0" y="575.8" width="100.4" height="65" fill="#dc6e70"/><rect x="1259.0" y="589.5" width="7" height="38.5" fill="#b84c51"/><rect x="1277.2" y="589.5" width="7" height="38.5" fill="#b84c51"/><rect x="1295.4" y="589.5" width="7" height="38.5" fill="#b84c51"/><rect x="1313.6" y="589.5" width="7" height="38.5" fill="#b84c51"/><rect x="1331.8" y="589.5" width="7" height="38.5" fill="#b84c51"/><rect x="1348.4" y="575.8" width="58.6" height="65" fill="#b84c51"/><rect x="1367.2" y="575.8" width="7" height="65" fill="#555f6c"/><rect x="1382.2" y="575.8" width="7" height="65" fill="#555f6c"/><rect x="1360.7" y="616.3" width="7" height="7.4" fill="#555f6c"/><rect x="1389.2" y="616.3" width="7.4" height="7.4" fill="#555f6c"/><rect x="1452.9" y="640.7" width="94.3" height="66" fill="#5aafcb"/><rect x="1467.4" y="654.3" width="7" height="39" fill="#2f5b88"/><rect x="1482.0" y="654.3" width="7" height="39" fill="#2f5b88"/><rect x="1496.6" y="654.3" width="7" height="39" fill="#2f5b88"/><rect x="1511.2" y="654.3" width="7" height="39" fill="#2f5b88"/><rect x="1525.8" y="654.3" width="7" height="39" fill="#2f5b88"/><rect x="1547.2" y="640.7" width="57.4" height="66" fill="#2f5b88"/><rect x="1572.7" y="640.7" width="8" height="66" fill="#a8c9dc"/><rect x="1565.0" y="659" width="23" height="7" fill="#a8c9dc"/><rect x="1565.0" y="681.5" width="23" height="7" fill="#a8c9dc"/><rect x="1604.6" y="640.7" width="58.6" height="66" fill="#f8d68b"/><path d="M1630.4 640.7 H1636.9 V706.7 H1631.4 Z" fill="#af874c"/><rect x="1623.9" y="661" width="8" height="7" fill="#af874c"/><rect x="1635.9" y="683" width="8" height="7" fill="#af874c"/><rect x="1504.2" y="575.8" width="100.4" height="65" fill="#dc6e70"/><rect x="1515.2" y="589.5" width="7" height="38.5" fill="#b84c51"/><rect x="1533.4" y="589.5" width="7" height="38.5" fill="#b84c51"/><rect x="1551.6" y="589.5" width="7" height="38.5" fill="#b84c51"/><rect x="1569.8" y="589.5" width="7" height="38.5" fill="#b84c51"/><rect x="1588.0" y="589.5" width="7" height="38.5" fill="#b84c51"/><rect x="1604.6" y="575.8" width="58.6" height="65" fill="#b84c51"/><rect x="1623.4" y="575.8" width="7" height="65" fill="#555f6c"/><rect x="1638.4" y="575.8" width="7" height="65" fill="#555f6c"/><rect x="1616.9" y="616.3" width="7" height="7.4" fill="#555f6c"/><rect x="1645.4" y="616.3" width="7.4" height="7.4" fill="#555f6c"/><rect x="1662.2" y="640.7" width="94.3" height="66" fill="#5aafcb"/><rect x="1676.7" y="654.3" width="7" height="39" fill="#2f5b88"/><rect x="1691.3" y="654.3" width="7" height="39" fill="#2f5b88"/><rect x="1705.9" y="654.3" width="7" height="39" fill="#2f5b88"/><rect x="1720.5" y="654.3" width="7" height="39" fill="#2f5b88"/><rect x="1735.1" y="654.3" width="7" height="39" fill="#2f5b88"/><rect x="1756.5" y="640.7" width="57.4" height="66" fill="#2f5b88"/><rect x="1782.0" y="640.7" width="8" height="66" fill="#a8c9dc"/><rect x="1774.3" y="659" width="23" height="7" fill="#a8c9dc"/><rect x="1774.3" y="681.5" width="23" height="7" fill="#a8c9dc"/><rect x="1813.9" y="640.7" width="58.6" height="66" fill="#f8d68b"/><path d="M1839.7 640.7 H1846.2 V706.7 H1840.7 Z" fill="#af874c"/><rect x="1833.2" y="661" width="8" height="7" fill="#af874c"/><rect x="1845.2" y="683" width="8" height="7" fill="#af874c"/><rect x="1713.5" y="575.8" width="100.4" height="65" fill="#dc6e70"/><rect x="1724.5" y="589.5" width="7" height="38.5" fill="#b84c51"/><rect x="1742.7" y="589.5" width="7" height="38.5" fill="#b84c51"/><rect x="1760.9" y="589.5" width="7" height="38.5" fill="#b84c51"/><rect x="1779.1" y="589.5" width="7" height="38.5" fill="#b84c51"/><rect x="1797.3" y="589.5" width="7" height="38.5" fill="#b84c51"/><rect x="1813.9" y="575.8" width="58.6" height="65" fill="#b84c51"/><rect x="1832.7" y="575.8" width="7" height="65" fill="#555f6c"/><rect x="1847.7" y="575.8" width="7" height="65" fill="#555f6c"/><rect x="1826.2" y="616.3" width="7" height="7.4" fill="#555f6c"/><rect x="1854.7" y="616.3" width="7.4" height="7.4" fill="#555f6c"/><rect x="1930" y="700" width="269" height="7" fill="#abb1bd"/><path d="M1940 492.8 H1956 V545 H1940 Q1930 545 1930 535 V502.8 Q1930 492.8 1940 492.8 Z" fill="#f6d28f"/><path d="M1940 492.8 H1956 V519 H1930 V502.8 Q1930 492.8 1940 492.8 Z" fill="#df7b6b"/><path d="M2173 492.8 H2189 Q2199 492.8 2199 502.8 V535 Q2199 545 2189 545 H2173 Z" fill="#f6d28f"/><path d="M2173 492.8 H2189 Q2199 492.8 2199 502.8 V519 H2173 Z" fill="#df7b6b"/><rect x="1989" y="448" width="151.4" height="53.6" fill="#f6d28f"/><rect x="1989" y="465" width="12" height="7" fill="#bca576"/><rect x="2010" y="465" width="17" height="7" fill="#bca576"/><rect x="2036" y="465" width="6" height="7" fill="#bca576"/><rect x="2051" y="465" width="21" height="7" fill="#bca576"/><rect x="2081" y="465" width="12" height="7" fill="#bca576"/><rect x="2102" y="465" width="16" height="7" fill="#bca576"/><rect x="2128" y="465" width="12" height="7" fill="#bca576"/><rect x="1989" y="478" width="3" height="7.5" fill="#bca576"/><rect x="2001" y="478" width="8" height="7.5" fill="#bca576"/><rect x="2018" y="478" width="8" height="7.5" fill="#bca576"/><rect x="2036" y="478" width="27" height="7.5" fill="#bca576"/><rect x="2072" y="478" width="21" height="7.5" fill="#bca576"/><rect x="2102" y="478" width="8" height="7.5" fill="#bca576"/><rect x="2119" y="478" width="8" height="7.5" fill="#bca576"/><rect x="2137" y="478" width="3" height="7.5" fill="#bca576"/><rect x="1955.8" y="438.8" width="33" height="261" rx="5" fill="#f1f1f1"/><path d="M1955.8 456.4 V443.8 Q1955.8 438.8 1960.8 438.8 H1983.8 Q1988.8 438.8 1988.8 443.8 V456.4 Z" fill="#9aa2b0"/><rect x="1955.8" y="691.3" width="33" height="8.7" fill="#9aa2b0"/><rect x="2140.4" y="438.8" width="33" height="261" rx="5" fill="#f1f1f1"/><path d="M2140.4 456.4 V443.8 Q2140.4 438.8 2145.4 438.8 H2168.4 Q2173.4 438.8 2173.4 443.8 V456.4 Z" fill="#9aa2b0"/><rect x="2140.4" y="691.3" width="33" height="8.7" fill="#9aa2b0"/><rect x="1980.5" y="552" width="8.5" height="8.5" fill="#e4e4e4"/><rect x="2140.4" y="552" width="8" height="8.5" fill="#e4e4e4"/><rect x="1980.5" y="578" width="8.5" height="8.5" fill="#e4e4e4"/><rect x="2140.4" y="578" width="8" height="8.5" fill="#e4e4e4"/><rect x="1980.5" y="602" width="8.5" height="8.5" fill="#e4e4e4"/><rect x="2140.4" y="602" width="8" height="8.5" fill="#e4e4e4"/><rect x="1980.5" y="627" width="8.5" height="8.5" fill="#e4e4e4"/><rect x="2140.4" y="627" width="8" height="8.5" fill="#e4e4e4"/><rect x="1980.5" y="656" width="8.5" height="8.5" fill="#e4e4e4"/><rect x="2140.4" y="656" width="8" height="8.5" fill="#e4e4e4"/><rect x="2043" y="510.5" width="43.4" height="56" rx="9" fill="#f1f1f1"/><ellipse cx="2064.7" cy="525.3" rx="13.2" ry="5.2" fill="#ffffff"/><path d="M2051.3 534 Q2064.7 541 2077.8 534 V557 Q2077.8 561 2073.8 561 H2055.3 Q2051.3 561 2051.3 557 Z" fill="#ffffff"/><rect x="2022" y="560.3" width="85.3" height="77.2" rx="10" fill="#f1f1f1"/><path d="M2036 569.2 H2039.8 V628.7 H2036 Q2030.9 628.7 2030.9 623.6 V574.3 Q2030.9 569.2 2036 569.2 Z" fill="#ffffff"/><path d="M2089.6 569.2 H2093.4 Q2098.5 569.2 2098.5 574.3 V623.6 Q2098.5 628.7 2093.4 628.7 H2089.6 Z" fill="#ffffff"/><rect x="2047.8" y="569.2" width="33.8" height="55.4" fill="#ffffff"/><rect x="2060.7" y="578.8" width="8" height="8" fill="#f1f1f1"/><rect x="2060.7" y="595.7" width="8" height="6.4" fill="#f1f1f1"/><rect x="2043" y="630" width="43.4" height="70" fill="#f1f1f1"/><rect x="2051.8" y="632.7" width="25.7" height="15.3" fill="#ffffff"/><rect x="2051.8" y="646" width="8.9" height="54" fill="#ffffff"/><rect x="2068.7" y="646" width="8.8" height="54" fill="#ffffff"/></svg>
</body></html>
